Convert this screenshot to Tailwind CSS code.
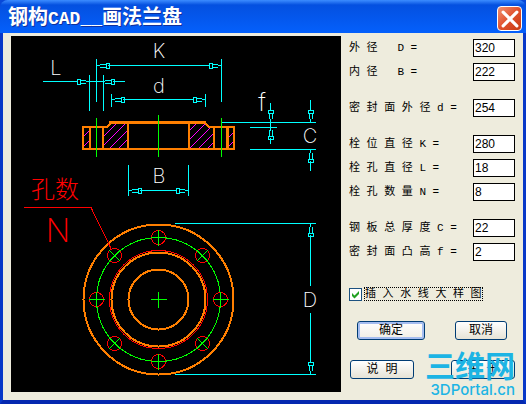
<!DOCTYPE html>
<html lang="zh-CN">
<head>
  <meta charset="UTF-8">
  <meta name="viewport" content="width=device-width,initial-scale=1.0">
  <title>钢构CAD__画法兰盘</title>
  <script src="https://cdn.jsdelivr.net/npm/@tailwindcss/browser@4"></script>
</head>
<body class="min-h-screen flex flex-col bg-[#0848d8] text-black font-['Liberation_Mono','Noto_Sans_CJK_SC',monospace]">
  <!-- title bar -->
  <header class="h-[33px] shrink-0 flex items-center justify-between pt-1 pl-2 pr-1 rounded-t-lg bg-linear-to-b from-[#3c8cff] from-0% via-[#0450e0] via-15% to-[#0460fc]">
    <h1 class="text-[20px] leading-6 font-bold text-white whitespace-nowrap [text-shadow:1px_1px_#10309c]">钢构<span class="text-[18px]">CAD__</span>画法兰盘</h1>
    <button type="button" aria-label="关闭" class="size-[25px] flex items-center justify-center rounded-[4px] border border-white bg-linear-to-br from-[#f09070] via-[#e0502c] to-[#c83c10]">
      <svg viewBox="0 0 16 16" class="size-5" stroke="#fff" stroke-width="2.500" stroke-linecap="round"><path d="M2.500 2.500l11 11M13.500 2.500l-11 11"/></svg>
    </button>
  </header>

  <main class="flex-1 flex gap-2 border-x-[3px] border-b-4 border-[#0838c8] border-b-[#0428b0] bg-[#eeecdd] pl-2 pt-[3px] pb-2 pr-2">
    <!-- flange drawing -->
    <div class="flex-1 bg-black">
      <svg viewBox="11 36 330 356" class="block w-full" fill="none" shape-rendering="crispEdges">
        <defs>
          <g id="arrow"><path d="M0 .5h3M3-1h6M3 2h6M9-2h3v5h-3z"/></g>
          <g id="hole"><circle r="7" stroke="#f00"/><path stroke="#0f0" d="M-8 0H8M0-8V8"/></g>
          <clipPath id="cut"><path d="M84 128h6v20h-6zM104 128h5l3-4h15v24h-23zM190 124h15l4 4h4v20h-23zM229 128h5v20h-5z"/></clipPath>
        </defs>

        <!-- section hatching -->
        <path clip-path="url(#cut)" stroke="#f0f" d="M82 138l10-10M82 148l10-10M102 138l16-16M102 147l25-25M107 151l24-24M116 151l14-14M187 133l12-12M187 142l20-20M187 151l26-26M196 151l20-20M206 150l10-10M226 140l10-10M226 149l10-10"/>
        <!-- section outline -->
        <g stroke="#ff7f00" stroke-width="2">
          <path d="M83 127h24l4-4M205 123l4 4h26M82 149h153M83 126v24M90 127v22M103 127v22M128 123v26M189 123v26M214 127v22M234 126v24"/>
          <path stroke-width="3" d="M109 122.500h97M227.500 127v22"/>
        </g>
        <path stroke="#0f0" d="M96.500 118v39M158.500 115v42M221.500 118v39"/>

        <!-- dimension lines -->
        <g stroke="#0ff">
          <path d="M96.500 59v43M221.500 59v43M108 65.500h102M89.500 75v36M103.500 75v36M43 81.500h35M90 81.500h13M113 81.500h12M111.500 94v13M205.500 94v13M123 99.500h71"/>
          <path d="M222 122.500h94M250 127.500h27M250 149.500h66M270.500 103v8M270.500 119v12M270.500 138v6M310.500 100v11M310.500 161v10"/>
          <path d="M128.500 165v31M188.500 165v31M140 190.500h37M175 223.500h141M175 374.500h141M310.500 235v51M310.500 313v50"/>
          <use href="#arrow" transform="translate(97 65)"/>
          <use href="#arrow" transform="translate(221 66) rotate(180)"/>
          <use href="#arrow" transform="translate(112 99)"/>
          <use href="#arrow" transform="translate(205 100) rotate(180)"/>
          <use href="#arrow" transform="translate(89 82) rotate(180)"/>
          <use href="#arrow" transform="translate(102 81)"/>
          <use href="#arrow" transform="translate(129 190)"/>
          <use href="#arrow" transform="translate(188 191) rotate(180)"/>
          <use href="#arrow" transform="translate(270 122) rotate(-90)"/>
          <use href="#arrow" transform="translate(271 127) rotate(90)"/>
          <use href="#arrow" transform="translate(310 122) rotate(-90)"/>
          <use href="#arrow" transform="translate(311 150) rotate(90)"/>
          <use href="#arrow" transform="translate(311 224) rotate(90)"/>
          <use href="#arrow" transform="translate(310 374) rotate(-90)"/>
        </g>

        <!-- plan view -->
        <g transform="translate(158.500 299.500)">
          <g stroke="#ff7f00" stroke-width="2"><circle r="75"/><circle r="47"/><circle r="30"/></g>
          <circle r="49" stroke="#f00"/>
          <circle r="62" stroke="#0f0"/>
          <path stroke="#0f0" d="M-8 0H8M0-8V8"/>
          <use href="#hole" transform="translate(0 -62)"/>
          <use href="#hole" transform="translate(62 0)"/>
          <use href="#hole" transform="translate(0 62)"/>
          <use href="#hole" transform="translate(-62 0)"/>
          <use href="#hole" transform="translate(44 -44) rotate(45)"/>
          <use href="#hole" transform="translate(44 44) rotate(45)"/>
          <use href="#hole" transform="translate(-44 44) rotate(45)"/>
          <use href="#hole" transform="translate(-44 -44) rotate(45)"/>
        </g>
        <path stroke="#f00" d="M24 207.500h67l20 41"/>

        <g class="font-['Inter',sans-serif] text-[20px] font-extralight" fill="#fff" text-anchor="middle">
          <text x="159" y="58">K</text>
          <text x="56" y="75">L</text>
          <text x="159" y="93">d</text>
          <text x="262" y="111" class="text-[24px]">f</text>
          <text x="310" y="143">C</text>
          <text x="159" y="183">B</text>
          <text x="310" y="307">D</text>
          <text x="58" y="242" fill="#f00" class="text-[32px]">N</text>
        </g>
        <text x="55" y="198" fill="#f00" text-anchor="middle" class="font-['Noto_Sans_CJK_SC',sans-serif] text-[24px] font-light">孔数</text>
      </svg>
    </div>

    <!-- parameters -->
    <form class="w-[166px] shrink-0 flex flex-col text-[11px]">
      <div class="flex flex-col gap-1.5 pt-[3px] whitespace-pre">
        <div class="flex h-[18px] items-center justify-between"><label for="outer">外 径   D =</label><input id="outer" value="320" class="w-[42px] h-[18px] border border-black bg-white pl-px font-['Liberation_Sans',sans-serif] text-[12px]"></div>
        <div class="flex h-[18px] items-center justify-between"><label for="inner">内 径   B =</label><input id="inner" value="222" class="w-[42px] h-[18px] border border-black bg-white pl-px font-['Liberation_Sans',sans-serif] text-[12px]"></div>
        <div class="flex h-[18px] items-center justify-between mt-3"><label for="face">密 封 面 外 径 d =</label><input id="face" value="254" class="w-[42px] h-[18px] border border-black bg-white pl-px font-['Liberation_Sans',sans-serif] text-[12px]"></div>
        <div class="flex h-[18px] items-center justify-between mt-3"><label for="pitch">栓 位 直 径 K =</label><input id="pitch" value="280" class="w-[42px] h-[18px] border border-black bg-white pl-px font-['Liberation_Sans',sans-serif] text-[12px]"></div>
        <div class="flex h-[18px] items-center justify-between"><label for="bolt">栓 孔 直 径 L =</label><input id="bolt" value="18" class="w-[42px] h-[18px] border border-black bg-white pl-px font-['Liberation_Sans',sans-serif] text-[12px]"></div>
        <div class="flex h-[18px] items-center justify-between"><label for="count">栓 孔 数 量 N =</label><input id="count" value="8" class="w-[42px] h-[18px] border border-black bg-white pl-px font-['Liberation_Sans',sans-serif] text-[12px]"></div>
        <div class="flex h-[18px] items-center justify-between mt-3"><label for="thick">钢 板 总 厚 度 C =</label><input id="thick" value="22" class="w-[42px] h-[18px] border border-black bg-white pl-px font-['Liberation_Sans',sans-serif] text-[12px]"></div>
        <div class="flex h-[18px] items-center justify-between"><label for="raise">密 封 面 凸 高 f =</label><input id="raise" value="2" class="w-[42px] h-[18px] border border-black bg-white pl-px font-['Liberation_Sans',sans-serif] text-[12px]"></div>
      </div>

      <div class="flex items-center gap-0.5 mt-[26px] whitespace-nowrap">
        <span class="grid size-[13px] shrink-0">
          <input id="detail" type="checkbox" checked class="col-start-1 row-start-1 size-[13px] appearance-none border border-[#1c5180] bg-white">
          <svg viewBox="0 0 13 13" class="col-start-1 row-start-1 pointer-events-none" fill="#21a121"><path d="M3 5l2.500 2.500L10 3v3l-4.500 4.500L3 8z"/></svg>
        </span>
        <label for="detail" class="h-[14px] leading-3 border border-dotted border-black">插 入 水 线 大 样 图</label>
      </div>

      <div class="flex justify-between mt-5 pl-2 pr-2">
        <button type="button" class="w-[68px] h-[19px] rounded-[3px] border border-[#003c74] bg-linear-to-b from-white to-[#f0eee4] shadow-[inset_0_0_0_2px_#a5bdf0] text-[12px] leading-4">确定</button>
        <button type="button" class="w-[52px] h-[19px] rounded-[3px] border border-[#003c74] bg-linear-to-b from-white to-[#e6e3d6] text-[12px] leading-4">取消</button>
      </div>

      <div class="relative flex justify-between mt-5 pl-px">
        <button type="button" class="w-[64px] h-[19px] rounded-[3px] border border-[#003c74] bg-linear-to-b from-white to-[#e6e3d6] text-[12px] leading-4">说 明</button>
        <button type="button" class="w-[64px] h-[19px] rounded-[3px] border border-[#003c74] bg-linear-to-b from-white to-[#e6e3d6] text-[12px] leading-4">关 于</button>
        <!-- site mark lies over the button -->
        <div class="absolute right-0 -top-3 flex flex-col items-end gap-1 pointer-events-none text-[#1cb4e4]">
          <span class="font-['Noto_Sans_CJK_SC',sans-serif] text-[30px] leading-8 font-bold">三维网</span>
          <span class="font-['Inter',sans-serif] text-[15px] leading-3 font-medium">3DPortal.cn</span>
        </div>
      </div>
    </form>
  </main>
</body>
</html>
